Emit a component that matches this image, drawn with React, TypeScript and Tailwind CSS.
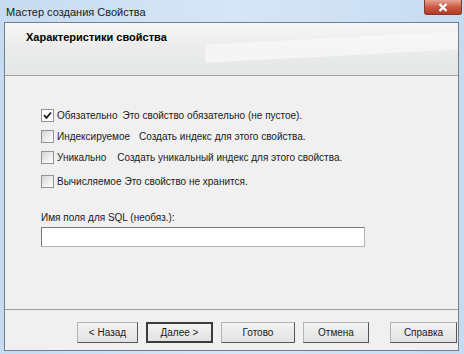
import React from "react";

const Check = ({ checked }: { checked?: boolean }) => (
  <div
    className={`w-[13px] h-[13px] border border-[#939393] flex items-center justify-center shrink-0 ${
      checked ? "bg-white" : "bg-gradient-to-br from-[#d6d6d6] to-[#ffffff]"
    }`}
  >
    {checked && (
      <svg width="9" height="9" viewBox="0 0 9 9">
        <path d="M1 4.2 L3.5 6.8 L8 1.5" stroke="#1a1a1a" strokeWidth="1.8" fill="none" />
      </svg>
    )}
  </div>
);

const Row = ({ checked, a, b, gap }: { checked?: boolean; a: string; b: string; gap: string }) => (
  <div className="flex items-center h-[13px]">
    <Check checked={checked} />
    <span className="ml-[3px]">{a}</span>
    <span className={gap}>{b}</span>
  </div>
);

const Btn = ({ label, def, w }: { label: string; def?: boolean; w: string }) => (
  <div
    className={`${w} h-[21px] flex items-center justify-center bg-gradient-to-b from-[#f3f3f3] to-[#e2e2e2] ${
      def ? "border-2 border-[#3c3c3c]" : "border border-[#b4b4b4] border-r-[#555] border-b-[#555]"
    }`}
  >
    {label}
  </div>
);

export default function App() {
  return (
    <div
      className="w-[464px] h-[354px] bg-gradient-to-r from-[#c6dbf1] via-[#d7e6f6] to-[#c6dbf1] flex flex-col text-[#1a1a1a]"
      style={{ fontFamily: '"Liberation Sans", Arial, sans-serif' }}
    >
      <div className="h-[22px] flex items-start justify-between pl-[6px] pr-[2px]">
        <span className="text-[11px] mt-[4px]">Мастер создания Свойства</span>
        <div className="w-[38px] h-[15px] rounded-b-[3px] border border-[#7a3b32] border-t-0 bg-gradient-to-b from-[#e4a494] via-[#cc5a44] to-[#b33b24] flex items-center justify-center">
          <svg width="10" height="9" viewBox="0 0 10 9">
            <path d="M1.5 1 L8.5 8 M8.5 1 L1.5 8" stroke="#ffffff" strokeWidth="2.2" />
          </svg>
        </div>
      </div>
      <div className="ml-[4px] mr-[5px] mb-[3px] flex-1 border border-[#6f7f8f] bg-[#f0f0f0] flex flex-col text-[10px]">
        <div className="h-[53px] border-b border-[#a0a0a0] bg-gradient-to-b from-[#f6f6f6] via-[#ebebeb] to-[#e4e8e8] relative overflow-hidden">
          <div className="absolute left-[200px] top-[14px] w-[300px] h-[18px] bg-[#fafafa] opacity-70 -rotate-3" />
          <div className="relative pl-[21px] pt-[6px] font-bold text-[11px] text-black">Характеристики свойства</div>
        </div>
        <div className="flex-1 pl-[36px] pt-[33px] flex flex-col">
          <div className="flex flex-col gap-[8px]">
            <Row checked a="Обязательно" b="Это свойство обязательно (не пустое)." gap="ml-[5px]" />
            <Row a="Индексируемое" b="Создать индекс для этого свойства." gap="ml-[9px]" />
            <Row a="Уникально" b="Создать уникальный индекс для этого свойства." gap="ml-[11px]" />
            <div className="mt-[3px]">
              <Row a="Вычисляемое" b="Это свойство не хранится." gap="ml-[3px]" />
            </div>
          </div>
          <div className="mt-[22px]">Имя поля для SQL (необяз.):</div>
          <div className="mt-[2px] w-[324px] h-[20px] bg-white border border-[#b4b4b4] border-t-[#7a7a7a] border-l-[#7a7a7a]" />
        </div>
        <div className="border-t border-[#a0a0a0] h-[41px] flex items-start pt-[12px] pl-[72px] gap-[8px]">
          <Btn label="< Назад" w="w-[61px]" />
          <Btn label="Далее >" def w="w-[67px]" />
          <Btn label="Готово" w="w-[74px]" />
          <Btn label="Отмена" w="w-[66px]" />
          <div className="w-[5px]" />
          <Btn label="Справка" w="w-[67px]" />
        </div>
      </div>
    </div>
  );
}
